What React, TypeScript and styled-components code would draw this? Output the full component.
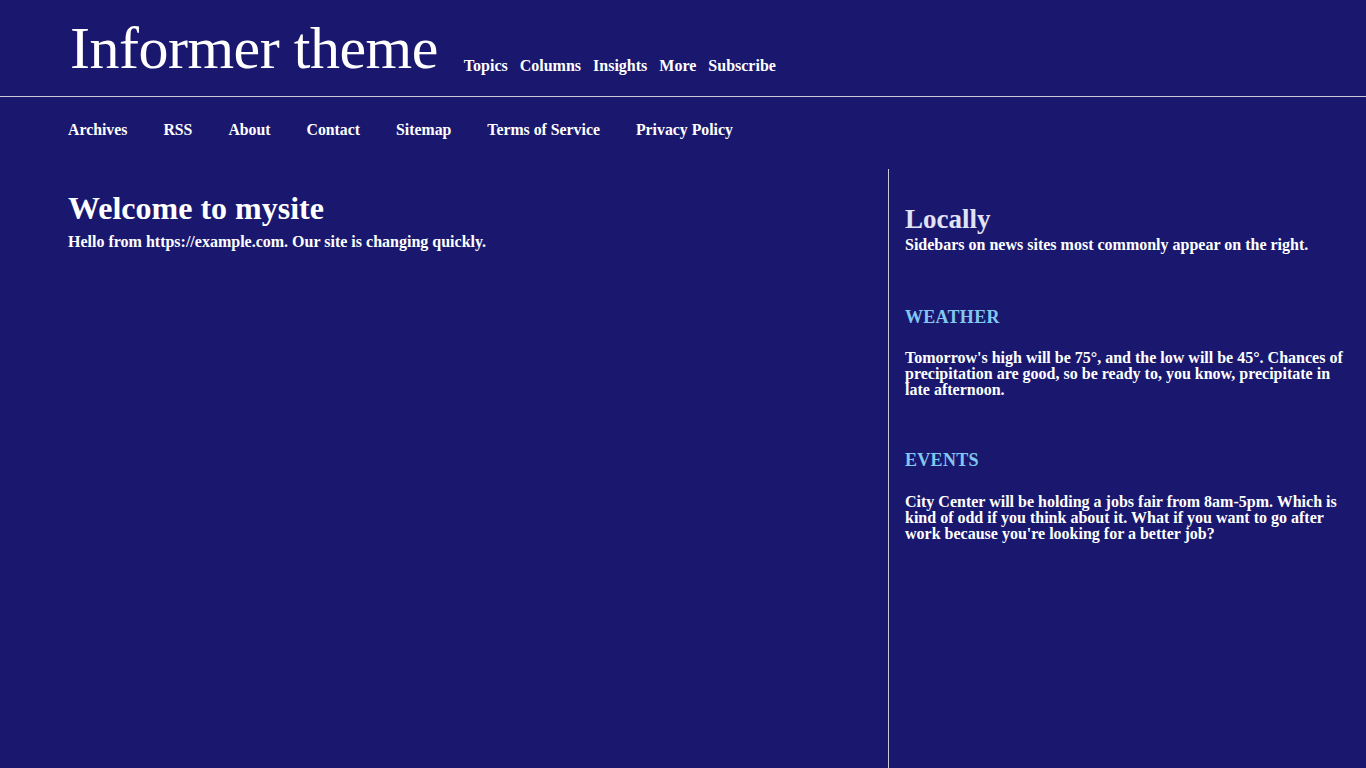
import styled, { createGlobalStyle } from 'styled-components'

const GlobalStyle = createGlobalStyle`
  html, body {
    margin: 0;
    padding: 0;
    background: #19186e;
    color: #ffffff;
    font-family: 'Liberation Serif', 'DejaVu Serif', serif;
  }
  #root {
    min-height: 100vh;
  }
`

const Page = styled.div`
  min-height: 100vh;
  display: flex;
  flex-direction: column;
`

const Masthead = styled.header`
  display: flex;
  align-items: flex-end;
  gap: 26px;
  padding: 18px 68px 18px 70px;
  border-bottom: 1px solid #c8c8d8;
`

const SiteTitle = styled.h1`
  margin: 0;
  font-size: 60px;
  font-weight: normal;
  line-height: 1;
  letter-spacing: -0.5px;
`

const TopNav = styled.nav`
  display: flex;
  gap: 12px;
  padding-bottom: 3px;
`

const NavLink = styled.a`
  color: #ffffff;
  text-decoration: none;
  font-size: 16px;
  font-weight: 600;
`

const SubNav = styled.nav`
  display: flex;
  gap: 36px;
  padding: 24px 68px 30px;
`

const SubLink = styled.a`
  color: #ffffff;
  text-decoration: none;
  font-size: 15.8px;
  font-weight: 600;
`

const Body = styled.div`
  flex: 1;
  display: grid;
  grid-template-columns: 889px 1fr;
`

const Main = styled.main`
  padding: 22px 20px 0 68px;
  border-right: 1px solid #c8c8d8;
`

const PageHeading = styled.h2`
  margin: 0 0 8px;
  font-size: 32px;
  font-weight: bold;
  line-height: 1.1;
`

const Text = styled.p`
  margin: 0;
  font-size: 16px;
  font-weight: 600;
  line-height: 1;
`

const Sidebar = styled.aside`
  padding: 36px 20px 0 16px;
`

const SideHeading = styled.h3`
  margin: 0 0 2px;
  font-size: 27px;
  font-weight: bold;
  line-height: 1.1;
  color: #e2e2f6;
`

const Widget = styled.section`
  margin-top: 54px;

  & + & {
    margin-top: 52px;
  }
`

const WidgetTitle = styled.h4`
  margin: 0 0 22px;
  font-size: 18px;
  font-weight: bold;
  line-height: 1.2;
  text-transform: uppercase;
  color: #82c8ee;
  letter-spacing: 0.3px;
`

export default function App() {
  return (
    <>
      <GlobalStyle />
      <Page>
        <Masthead>
          <SiteTitle>Informer theme</SiteTitle>
          <TopNav>
            {['Topics', 'Columns', 'Insights', 'More', 'Subscribe'].map((l) => (
              <NavLink key={l} href="#">{l}</NavLink>
            ))}
          </TopNav>
        </Masthead>
        <SubNav>
          {['Archives', 'RSS', 'About', 'Contact', 'Sitemap', 'Terms of Service', 'Privacy Policy'].map((l) => (
            <SubLink key={l} href="#">{l}</SubLink>
          ))}
        </SubNav>
        <Body>
          <Main>
            <PageHeading>Welcome to mysite</PageHeading>
            <Text>Hello from https://example.com. Our site is changing quickly.</Text>
          </Main>
          <Sidebar>
            <SideHeading>Locally</SideHeading>
            <Text>Sidebars on news sites most commonly appear on the right.</Text>
            <Widget>
              <WidgetTitle>Weather</WidgetTitle>
              <Text>
                Tomorrow's high will be 75°, and the low will be 45°. Chances of precipitation are good, so be
                ready to, you know, precipitate in late afternoon.
              </Text>
            </Widget>
            <Widget>
              <WidgetTitle>Events</WidgetTitle>
              <Text>
                City Center will be holding a jobs fair from 8am-5pm. Which is kind of odd if you think about
                it. What if you want to go after work because you're looking for a better job?
              </Text>
            </Widget>
          </Sidebar>
        </Body>
      </Page>
    </>
  )
}
